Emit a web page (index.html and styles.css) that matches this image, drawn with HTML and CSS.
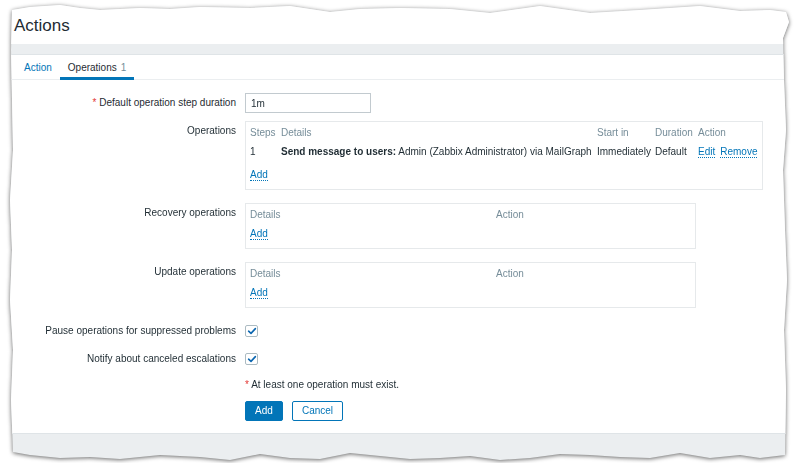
FILE: index.html
```html
<!DOCTYPE html>
<html lang="en">
<head>
<meta charset="utf-8">
<title>Actions</title>
<link rel="stylesheet" href="styles.css">
</head>
<body>
<div class="page">
  <div class="sheet">
    <header class="header">
      <h1 class="title">Actions</h1>
    </header>
    <div class="wrapper">
      <div class="panel">
        <ul class="tabs">
          <li class="tab">Action</li>
          <li class="tab tab-active">Operations<span class="tab-count">1</span></li>
        </ul>
        <div class="form">
          <div class="row">
            <div class="label"><span class="req">*</span> Default operation step duration</div>
            <div class="control"><input class="text-input" type="text" value="1m"></div>
          </div>
          <div class="row">
            <div class="label">Operations</div>
            <div class="control">
              <div class="opbox opbox-wide">
                <table class="optable optable-ops">
                  <colgroup>
                    <col class="c-steps"><col class="c-details"><col class="c-start"><col class="c-duration"><col class="c-action">
                  </colgroup>
                  <thead>
                    <tr class="head-row"><th>Steps</th><th>Details</th><th>Start in</th><th>Duration</th><th>Action</th></tr>
                  </thead>
                  <tbody>
                    <tr class="data-row">
                      <td>1</td>
                      <td><b>Send message to users:</b> Admin (Zabbix Administrator) via MailGraph</td>
                      <td>Immediately</td>
                      <td>Default</td>
                      <td><a class="link">Edit</a><a class="link link-gap">Remove</a></td>
                    </tr>
                    <tr class="add-row"><td colspan="5"><a class="link">Add</a></td></tr>
                  </tbody>
                </table>
              </div>
            </div>
          </div>
          <div class="row">
            <div class="label">Recovery operations</div>
            <div class="control">
              <div class="opbox">
                <table class="optable optable-small">
                  <colgroup><col class="c-rdetails"><col class="c-raction"></colgroup>
                  <thead><tr class="head-row"><th>Details</th><th>Action</th></tr></thead>
                  <tbody><tr class="add-row"><td colspan="2"><a class="link">Add</a></td></tr></tbody>
                </table>
              </div>
            </div>
          </div>
          <div class="row">
            <div class="label">Update operations</div>
            <div class="control">
              <div class="opbox">
                <table class="optable optable-small">
                  <colgroup><col class="c-rdetails"><col class="c-raction"></colgroup>
                  <thead><tr class="head-row"><th>Details</th><th>Action</th></tr></thead>
                  <tbody><tr class="add-row"><td colspan="2"><a class="link">Add</a></td></tr></tbody>
                </table>
              </div>
            </div>
          </div>
          <div class="row">
            <div class="label">Pause operations for suppressed problems</div>
            <div class="control control-check">
              <span class="checkbox"><svg width="10" height="10" viewBox="0 0 10 10"><path d="M1.6 5.2 L4 7.4 L8.4 2.6" fill="none" stroke="#0b66b0" stroke-width="1.6" stroke-linecap="round" stroke-linejoin="round"/></svg></span>
            </div>
          </div>
          <div class="row">
            <div class="label">Notify about canceled escalations</div>
            <div class="control control-check">
              <span class="checkbox"><svg width="10" height="10" viewBox="0 0 10 10"><path d="M1.6 5.2 L4 7.4 L8.4 2.6" fill="none" stroke="#0b66b0" stroke-width="1.6" stroke-linecap="round" stroke-linejoin="round"/></svg></span>
            </div>
          </div>
          <div class="row row-note">
            <div class="label"></div>
            <div class="control"><span class="req">*</span> At least one operation must exist.</div>
          </div>
          <div class="row">
            <div class="label"></div>
            <div class="control buttons">
              <button class="btn btn-primary" type="button">Add</button>
              <button class="btn btn-alt" type="button">Cancel</button>
            </div>
          </div>
        </div>
      </div>
    </div>
  </div>
</div>
</body>
</html>
```

FILE: styles.css
```css
html, body {
  margin: 0;
  padding: 0;
  background: #ffffff;
}

body {
  font-family: "Liberation Sans", Arial, sans-serif;
  font-size: 10px;
  color: #1f2c33;
}

.page {
  padding: 3px 0 0 8px;
  filter: drop-shadow(0 1px 2px rgba(0, 0, 0, 0.6));
}

.sheet {
  width: 784px;
  height: 460px;
  background: #ebeef0;
  display: flex;
  flex-direction: column;
  clip-path: polygon(
    4px 7px, 22px 4px, 52px 2px, 72px 5px, 92px 7px, 132px 5px, 162px 6px, 192px 4px,
    242px 5px, 282px 3px, 322px 9px, 352px 6px, 392px 5px, 442px 6px, 482px 10px, 532px 3px,
    582px 10px, 632px 7px, 692px 3px, 732px 8px, 762px 7px, 778px 9px,
    781px 19px, 775px 35px, 776px 77px, 778px 127px, 775px 167px, 777px 227px, 779px 277px,
    776px 327px, 778px 387px, 777px 452px,
    752px 455px, 732px 452px, 702px 455px, 672px 450px, 642px 455px, 612px 454px, 582px 452px,
    552px 451px, 522px 455px, 492px 457px, 462px 453px, 432px 455px, 402px 456px, 372px 453px,
    342px 450px, 312px 456px, 282px 455px, 252px 451px, 222px 457px, 192px 454px, 152px 452px,
    112px 456px, 82px 454px, 52px 455px, 22px 452px, 5px 449px,
    3px 397px, 5px 347px, 2px 297px, 4px 247px, 2px 197px, 5px 147px, 4px 97px, 3px 47px
  );
}

.header {
  background: #ffffff;
  padding: 13px 0 8px 6px;
}

.title {
  margin: 0;
  font-size: 17px;
  font-weight: normal;
  line-height: 20px;
  color: #1f2c33;
}

.wrapper {
  padding-top: 10px;
}

.panel {
  background: #ffffff;
  border: 1px solid #dfe4e7;
}

.tabs {
  list-style: none;
  margin: 0;
  padding: 0 0 0 7px;
  display: flex;
  border-bottom: 1px solid #ebeef0;
}

.tab {
  padding: 4px 8px 0;
  line-height: 18px;
  border-bottom: 3px solid transparent;
  margin-bottom: -1px;
  color: #0275b8;
}

.tab-active {
  color: #1f2c33;
  border-bottom-color: #0275b8;
}

.tab-count {
  margin-left: 4px;
  color: #768d99;
}

.form {
  padding: 13px 0 12px;
  display: flex;
  flex-direction: column;
  gap: 8px;
}

.row {
  display: grid;
  grid-template-columns: 227px 1fr;
  column-gap: 9px;
  min-height: 20px;
}

.label {
  text-align: right;
  line-height: 20px;
  white-space: nowrap;
}

.control {
  line-height: 20px;
}

.req {
  color: #e33734;
}

.text-input {
  box-sizing: border-box;
  width: 126px;
  height: 20px;
  margin: 0;
  padding: 0 5px;
  border: 1px solid #c2cacf;
  border-radius: 0;
  font-family: "Liberation Sans", Arial, sans-serif;
  font-size: 10px;
  color: #1f2c33;
  display: block;
}

.opbox {
  box-sizing: border-box;
  width: 451px;
  border: 1px solid #e6e9eb;
  padding: 1px 5px 5px 4px;
  margin-bottom: 5px;
}

.opbox-wide {
  width: 518px;
}

.optable {
  border-collapse: collapse;
  table-layout: fixed;
  white-space: nowrap;
}

.optable-ops {
  width: 507px;
}

.optable-small {
  width: 440px;
}

.c-steps { width: 31px; }
.c-details { width: 316px; }
.c-start { width: 58px; }
.c-duration { width: 43px; }
.c-action { width: 59px; }
.c-rdetails { width: 246px; }
.c-raction { width: 194px; }

.optable th,
.optable td {
  padding: 0;
  text-align: left;
  vertical-align: top;
  line-height: 19px;
  overflow: visible;
}

.optable th {
  font-weight: normal;
  color: #768d99;
}

.data-row td {
  padding-bottom: 4px;
}

.link {
  color: #0275b8;
  text-decoration: none;
  border-bottom: 1px dotted #0275b8;
  cursor: pointer;
}

.link-gap {
  margin-left: 5px;
}

.control-check {
  display: flex;
  align-items: center;
}

.checkbox {
  box-sizing: border-box;
  width: 13px;
  height: 12px;
  border: 1px solid #acbbc2;
  border-radius: 2px;
  background: #ffffff;
  display: flex;
  align-items: center;
  justify-content: center;
}

.checkbox svg {
  display: block;
}

.row-note {
  min-height: 16px;
}

.row-note .label,
.row-note .control {
  line-height: 16px;
}

.buttons {
  display: flex;
  gap: 9px;
}

.btn {
  box-sizing: border-box;
  height: 20px;
  margin: 0;
  font-family: "Liberation Sans", Arial, sans-serif;
  font-size: 10px;
  line-height: 18px;
  border-radius: 2px;
  cursor: pointer;
}

.btn-primary {
  width: 38px;
  padding: 0;
  background: #0275b8;
  border: 1px solid #0275b8;
  color: #ffffff;
}

.btn-alt {
  width: 51px;
  padding: 0;
  background: #ffffff;
  border: 1px solid #0275b8;
  color: #0275b8;
}
```
